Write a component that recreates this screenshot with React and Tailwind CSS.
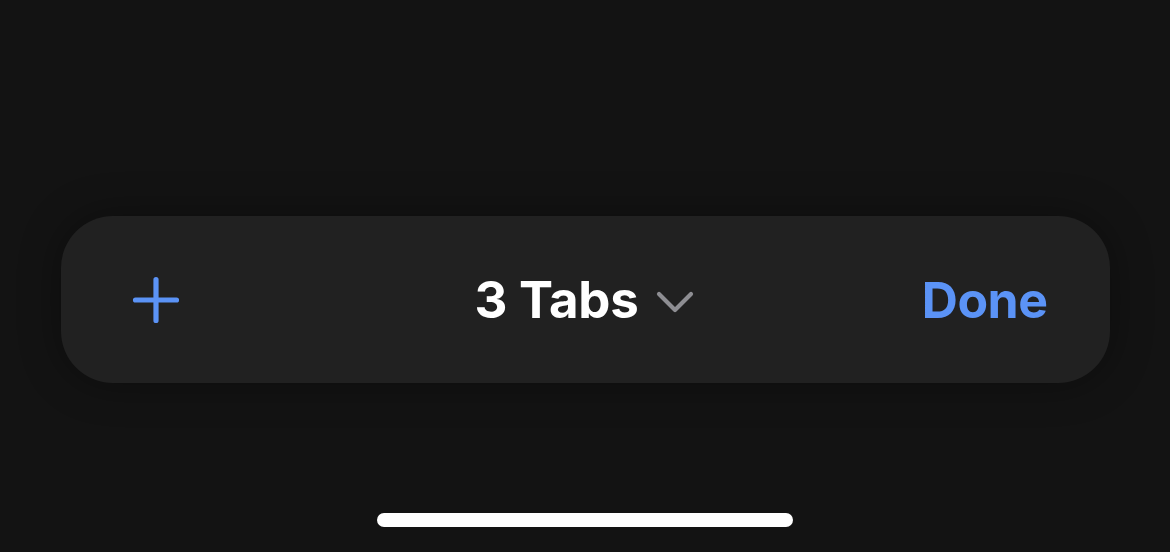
export default function App() {
  return (
    <div
      className="w-[1170px] h-[552px] bg-[#131313] flex flex-col items-center overflow-hidden"
      style={{ fontFamily: "Inter, 'Liberation Sans', sans-serif" }}
    >
      {/* Tab bar */}
      <div className="mt-[216px] w-[1049px] h-[167px] rounded-[52px] bg-[#212121] shadow-[0_0_40px_rgba(0,0,0,0.35)] grid grid-cols-[1fr_auto_1fr] items-center px-[62px]">
        <div className="flex items-center pl-[8px]">
          <svg width="50" height="50" viewBox="0 0 50 50" className="text-[#5b93f6]">
            <path d="M25 4.5V45.5M4.5 25H45.5" stroke="currentColor" strokeWidth="5.2" strokeLinecap="round" fill="none" />
          </svg>
        </div>
        <button className="flex items-center gap-[17px] text-white text-[51px] font-bold tracking-[-0.3px] leading-none">
          <span>3 Tabs</span>
          <svg width="40" height="24" viewBox="0 0 40 24" className="text-[#8e8e93] mt-[4px]">
            <path d="M4 4L20 20L36 4" stroke="currentColor" strokeWidth="4.2" strokeLinecap="round" strokeLinejoin="round" fill="none" />
          </svg>
        </button>
        <div className="flex justify-end">
          <span className="text-[#5b93f6] text-[50px] font-bold tracking-[-0.5px] leading-none">
            Done
          </span>
        </div>
      </div>

      {/* Home indicator */}
      <div className="mt-[130px] w-[416px] h-[14px] rounded-full bg-white" />
    </div>
  );
}
